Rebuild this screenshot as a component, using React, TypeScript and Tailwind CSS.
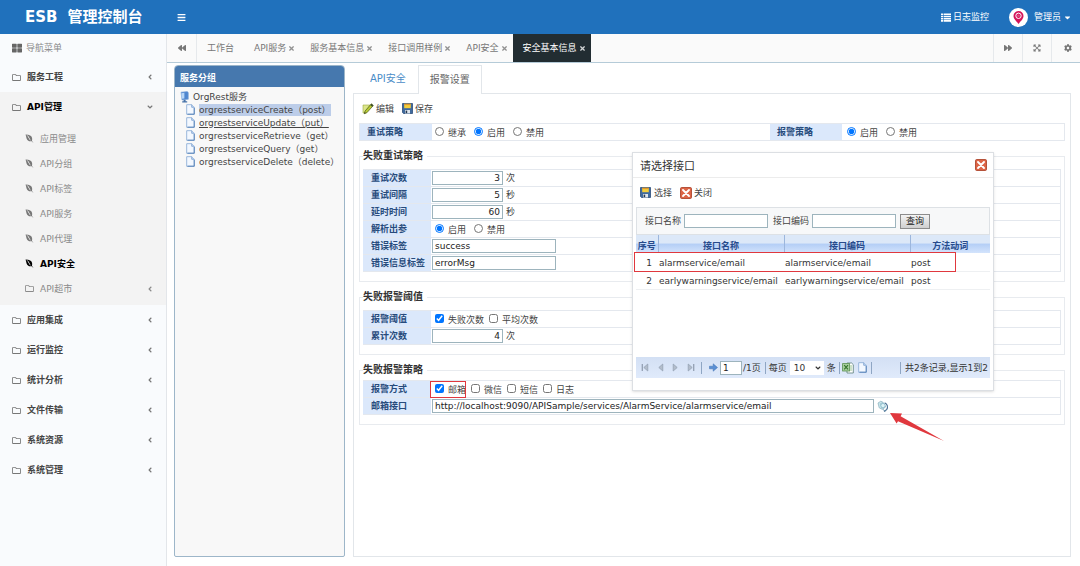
import { useState } from 'react'
import type { ReactNode } from 'react'
import {
  FaAngleDown,
  FaAngleLeft,
  FaBackward,
  FaBars,
  FaCaretDown,
  FaCog,
  FaEnvira,
  FaExpandArrowsAlt,
  FaForward,
  FaRegFolder,
  FaThLarge,
  FaTimes,
} from 'react-icons/fa'

const apiChildren = ['应用管理', 'API分组', 'API标签', 'API服务', 'API代理', 'API安全']
const otherGroups = ['应用集成', '运行监控', '统计分析', '文件传输', '系统资源', '系统管理']
const openTabs = ['API服务', '服务基本信息', '接口调用样例', 'API安全', '安全基本信息']
const services = [
  'orgrestserviceCreate（post）',
  'orgrestserviceUpdate（put）',
  'orgrestserviceRetrieve（get）',
  'orgrestserviceQuery（get）',
  'orgrestserviceDelete（delete）',
]
const interfaces = [
  { name: 'alarmservice/email', code: 'alarmservice/email', verb: 'post' },
  { name: 'earlywarningservice/email', code: 'earlywarningservice/email', verb: 'post' },
]

/* ---------- icons ---------- */

function ListIcon() {
  return (
    <svg width="10" height="9" viewBox="0 0 10 9" aria-hidden="true">
      <path d="M0 .5h2v1.600H0zM0 2.700h2v1.600H0zM0 4.900h2v1.600H0zM0 7.100h2v1.600H0z" fill="currentColor" />
      <path d="M2.600.5H10v1.600H2.600zM2.600 2.700H10v1.600H2.600zM2.600 4.900H10v1.600H2.600zM2.600 7.100H10v1.600H2.600z" fill="currentColor" />
    </svg>
  )
}

function PencilIcon() {
  return (
    <svg width="12" height="12" viewBox="0 0 12 12" aria-hidden="true">
      <path d="M1 2h6v1.5H2.5V10H1z" fill="#c9d65c" />
      <path d="M1 2h7L3 10H1z" fill="#dbe58a" stroke="#9aa83c" strokeWidth=".6" />
      <path d="M9.4.8l1.9 1.7-6.4 7.2-2.5 1 .6-2.6z" fill="#b7c934" stroke="#4d5b18" strokeWidth=".7" />
      <path d="M9.4.8l1.9 1.7-1.1 1.2L8.3 2z" fill="#3b4a2a" />
      <path d="M2.4 10.7l.4-1.4.9.8z" fill="#222" />
    </svg>
  )
}

function DiskIcon() {
  return (
    <svg width="11" height="11" viewBox="0 0 11 11" aria-hidden="true">
      <path d="M.5.5h10v10H1.5l-1-1z" fill="#3f6a9e" stroke="#2c4d78" strokeWidth=".8" />
      <path d="M2.2.8h6.6v4.4H2.2z" fill="#f4cf3c" />
      <path d="M2.2.8h6.6v1.3H2.2z" fill="#e0962b" />
      <path d="M3 7h5v3.5H3z" fill="#dfe6ee" />
      <path d="M3.6 7.6h1.6v2.5H3.6z" fill="#26384f" />
    </svg>
  )
}

function CrossIcon() {
  return (
    <svg width="12" height="12" viewBox="0 0 12 12" aria-hidden="true">
      <rect x=".5" y=".5" width="11" height="11" rx="1.2" fill="#dc6446" stroke="#b5523a" />
      <path d="M3 3l6 6M9 3L3 9" stroke="#fff" strokeWidth="1.9" strokeLinecap="round" />
    </svg>
  )
}

function ServerIcon() {
  return (
    <svg width="9" height="12" viewBox="0 0 9 12" aria-hidden="true">
      <path d="M1 1.2L7.2.5 8.3 1.6v6.6L2 9z" fill="#4f86cf" stroke="#7ea6da" strokeWidth=".6" />
      <path d="M1.4 2.2l3-.4v5.6l-2.6.4z" fill="#b8d6f7" />
      <path d="M3.6 8.8h2v1.4h1.6v1.2H2.2v-1.2h1.4z" fill="#4672a8" />
    </svg>
  )
}

function PageIcon() {
  return (
    <svg width="9" height="11" viewBox="0 0 9 11" aria-hidden="true">
      <path d="M.7.7h5l2.6 2.6v7H.7z" fill="#f3f8ff" stroke="#8fb0d8" strokeWidth=".9" />
      <path d="M5.7.7v2.6h2.6" fill="#c6dbf5" stroke="#6d95c8" strokeWidth=".7" />
      <path d="M8.2 4v6.2H1.5" fill="none" stroke="#4f7db5" strokeWidth=".9" />
    </svg>
  )
}

function ExcelIcon() {
  return (
    <svg width="12" height="12" viewBox="0 0 12 12" aria-hidden="true">
      <path d="M5 1h4.6l1.7 1.7V11H5z" fill="#fff" stroke="#5a7f78" strokeWidth=".8" />
      <path d="M7.5 4h2.6M7.5 6h2.6M7.5 8h2.6" stroke="#7fb574" strokeWidth=".8" />
      <rect x=".6" y="1.6" width="7" height="7.4" fill="#a9cf9f" stroke="#5b9152" strokeWidth=".8" />
      <path d="M2.2 3.2l3.8 4.2M6 3.2L2.2 7.4" stroke="#35752d" strokeWidth="1.2" />
    </svg>
  )
}

function LookupIcon() {
  return (
    <svg width="12" height="12" viewBox="0 0 12 12" aria-hidden="true">
      <path d="M1 3l2.800-1.800L6.200 2.400 8.600 7 5.400 9.400 2.200 7.800z" fill="#c8e6ec" stroke="#86aebb" strokeWidth=".7" />
      <path d="M3.400 3.600L5.800 2.600M3.400 3.600l2 5.400" stroke="#8fb5c2" strokeWidth=".6" />
      <circle cx="6" cy="5.600" r="2.200" fill="#e2f6fa" fillOpacity=".8" stroke="#7fb3c4" strokeWidth=".7" />
      <path d="M8 3c2.400 1.200 3.200 4 1.800 6.400L7.400 11.200" fill="none" stroke="#4a6f93" strokeWidth="1.100" strokeLinecap="round" />
      <path d="M6.400 9.400l1.200 1.800 1.600-.8" fill="none" stroke="#5f87a5" strokeWidth=".9" />
    </svg>
  )
}

function PagerIcon({ flip = false, edge = false }: { flip?: boolean; edge?: boolean }) {
  return (
    <svg width="9" height="9" viewBox="0 0 9 9" className={flip ? 'rotate-180' : ''} aria-hidden="true">
      {edge && <path d="M1.3 1v7" stroke="#93a0b3" strokeWidth="1.3" />}
      <path d="M6.8 1v7L2.8 4.5z" fill="#b3bdcb" stroke="#8f9db0" strokeWidth=".7" />
    </svg>
  )
}

/* ---------- shell ---------- */

function TopBar() {
  return (
    <header className="flex h-[34px] shrink-0 items-center bg-[#2071bc] text-white">
      <h1 className="flex w-[167px] shrink-0 gap-2.5 pl-[25px] text-[15px] leading-none font-bold">
        <span>ESB</span>
        <span>管理控制台</span>
      </h1>
      <button aria-label="菜单" className="ml-2.5">
        <FaBars size={9} />
      </button>
      <a href="#logs" className="ml-auto flex items-center gap-0.5">
        <ListIcon />
        日志监控
      </a>
      <button className="mr-2 ml-5 flex items-center gap-0.5">
        <svg width="19" height="19" viewBox="0 0 19 19" className="mr-1" aria-hidden="true">
          <circle cx="9.5" cy="9.5" r="9.5" fill="#fff" />
          <path d="M9.5 16c-1.400-2.300-5-4.600-5-8a5 5 0 0 1 10 0c0 3.400-3.600 5.700-5 8z" fill="#d4145a" />
          <circle cx="9.500" cy="7.800" r="2.700" fill="none" stroke="#fff" strokeWidth="1" />
          <circle cx="9.500" cy="7.800" r="1.300" fill="#e0487e" />
        </svg>
        管理员
        <FaCaretDown size={9} />
      </button>
    </header>
  )
}

function GroupItem({ label, open = false }: { label: string; open?: boolean }) {
  return (
    <a
      href="#group"
      className={`flex h-[30px] items-center gap-1.5 pr-3 pl-3 font-bold ${open ? 'text-black' : 'text-[#444]'}`}
    >
      <FaRegFolder size={9} className="text-[#777]" />
      <span className="flex-1">{label}</span>
      {open ? <FaAngleDown size={8} className="text-[#777]" /> : <FaAngleLeft size={8} className="text-[#777]" />}
    </a>
  )
}

function Sidebar() {
  return (
    <nav className="w-[167px] shrink-0 border-r border-[#e3e6ea] bg-[#f9fbfd]">
      <div className="flex h-7 items-center gap-1 pl-3 text-[#888]">
        <FaThLarge size={10} className="text-[#666]" />
        导航菜单
      </div>
      <GroupItem label="服务工程" />
      <div className="bg-[#f3f3f3] pb-1">
        <GroupItem label="API管理" open />
        <ul className="pt-1">
          {apiChildren.map((item) => (
            <li key={item}>
              <a
                href="#item"
                className={`flex h-[25px] items-center gap-1.5 pl-[25px] ${
                  item === 'API安全' ? 'font-bold text-black' : 'text-[#8a8a8a]'
                }`}
              >
                <FaEnvira size={9} className={item === 'API安全' ? '' : 'text-[#777]'} />
                {item}
              </a>
            </li>
          ))}
          <li>
            <a href="#item" className="flex h-[25px] items-center gap-1.5 pr-3 pl-[25px] text-[#8a8a8a]">
              <FaRegFolder size={9} />
              <span className="flex-1">API超市</span>
              <FaAngleLeft size={8} />
            </a>
          </li>
        </ul>
      </div>
      {otherGroups.map((g) => (
        <GroupItem key={g} label={g} />
      ))}
    </nav>
  )
}

function TabBar() {
  return (
    <div className="flex h-[29px] shrink-0 border-b border-[#b5cbd8] bg-[#fafafa] text-[#777]">
      <button aria-label="向左" className="flex w-[30px] items-center justify-center border-r border-[#e6e9ec]">
        <FaBackward size={8} />
      </button>
      <a href="#home" className="flex items-center px-2.5">
        工作台
      </a>
      {openTabs.map((t) => (
        <a
          key={t}
          href="#tab"
          className={`flex items-center gap-0.5 pr-1.5 pl-2.5 whitespace-nowrap ${
            t === '安全基本信息' ? 'bg-[#222d32] text-white' : ''
          }`}
        >
          {t}
          <FaTimes size={7} className="-mr-px opacity-80" />
        </a>
      ))}
      <div className="ml-auto flex">
        <button aria-label="向右" className="flex w-[29px] items-center justify-center border-l border-[#e6e9ec]">
          <FaForward size={8} />
        </button>
        <button aria-label="全屏" className="flex w-[29px] items-center justify-center border-l border-[#e6e9ec]">
          <FaExpandArrowsAlt size={8} />
        </button>
        <button aria-label="设置" className="flex w-[29px] items-center justify-center border-l border-[#e6e9ec] pl-1">
          <FaCog size={8} />
        </button>
      </div>
    </div>
  )
}

function ServiceTree() {
  return (
    <aside className="w-[171px] shrink-0 overflow-hidden rounded-t-[4px] rounded-b-[2px] border border-[#9db6c9] bg-[#f8f8f8]">
      <h2 className="flex h-[21px] items-center bg-[#4678ae] pt-0.5 pl-[5px] font-bold text-white">服务分组</h2>
      <div className="pt-[3px] pl-[5px]">
        <div className="flex h-[13px] items-center gap-1">
          <ServerIcon />
          OrgRest服务
        </div>
        <ul>
          {services.map((s, i) => (
            <li key={s} className="flex h-[13px] items-center gap-1 pl-1.5 whitespace-nowrap">
              <PageIcon />
              <a
                href="#service"
                className={`leading-3 ${i === 0 ? 'bg-[#bccde9]' : ''} ${i === 1 ? 'underline' : ''}`}
              >
                {s}
              </a>
            </li>
          ))}
        </ul>
      </div>
    </aside>
  )
}

/* ---------- form parts ---------- */

function Row({ label, htmlFor, children }: { label: string; htmlFor?: string; children: ReactNode }) {
  return (
    <div className="flex h-[17px] border-b border-[#e4e8ee]">
      <label
        htmlFor={htmlFor}
        className="flex w-[68px] shrink-0 items-center bg-[#dbe8fb] pl-2 font-bold whitespace-nowrap text-[#274b7c]"
      >
        {label}
      </label>
      <div className="flex min-w-0 flex-1 items-center gap-[3px] pl-px">{children}</div>
    </div>
  )
}

function Section({ title, tight = false, children }: { title: string; tight?: boolean; children: ReactNode }) {
  return (
    <fieldset className={`mt-2 min-w-0 border border-[#e8ebef] px-[3px] pb-[9px] ${tight ? 'pt-[3px]' : 'pt-1.5'}`}>
      <legend className="h-3.5 pr-1 text-[10px] leading-[14px] font-bold text-[#333]">{title}</legend>
      <div className="border-t border-r border-[#e4e8ee]">{children}</div>
    </fieldset>
  )
}

const fieldClass = 'h-3.5 border border-[#9db4bd] bg-white px-0.5 text-[#222] outline-none'

interface ChoiceProps {
  type: 'radio' | 'checkbox'
  name: string
  label: string
  checked?: boolean
  marked?: boolean
}

function Choice({ type, name, label, checked = false, marked = false }: ChoiceProps) {
  return (
    <label className="relative flex items-center gap-1 pt-px whitespace-nowrap">
      <input type={type} name={name} defaultChecked={checked} className="mb-0.5 size-[9px]" />
      {label}
      {marked && <span className="absolute -inset-y-0.5 right-0 -left-[5px] border border-[#e0383e]" />}
    </label>
  )
}

function AlarmForm() {
  return (
    <div className="min-h-0 flex-1 border border-[#e2e6ea] bg-white px-[5px]">
      <div className="flex h-[29px] items-center gap-2 pl-[3px]">
        <button className="flex items-center gap-0.5">
          <PencilIcon />
          编辑
        </button>
        <button className="flex items-center gap-0.5">
          <DiskIcon />
          保存
        </button>
      </div>

      <div className="flex h-[18px] border border-[#e4e8ee]">
        <span className="flex w-[72px] shrink-0 items-center bg-[#dbe8fb] pl-[7px] font-bold text-[#274b7c]">重试策略</span>
        <div className="flex flex-1 items-center gap-2 pl-[3px]">
          <Choice type="radio" name="retry" label="继承" />
          <Choice type="radio" name="retry" label="启用" checked />
          <Choice type="radio" name="retry" label="禁用" />
        </div>
        <span className="flex w-[72px] shrink-0 items-center bg-[#dbe8fb] pl-[7px] font-bold text-[#274b7c]">报警策略</span>
        <div className="flex w-[222px] shrink-0 items-center gap-2 pl-[5px]">
          <Choice type="radio" name="alarm" label="启用" checked />
          <Choice type="radio" name="alarm" label="禁用" />
        </div>
      </div>

      <Section title="失败重试策略">
        <Row label="重试次数" htmlFor="times">
          <input id="times" defaultValue="3" className={`${fieldClass} w-[71px] text-right`} />次
        </Row>
        <Row label="重试间隔" htmlFor="interval">
          <input id="interval" defaultValue="5" className={`${fieldClass} w-[71px] text-right`} />秒
        </Row>
        <Row label="延时时间" htmlFor="delay">
          <input id="delay" defaultValue="60" className={`${fieldClass} w-[71px] text-right`} />秒
        </Row>
        <Row label="解析出参">
          <div className="flex gap-2 pl-[3px]">
            <Choice type="radio" name="parse" label="启用" checked />
            <Choice type="radio" name="parse" label="禁用" />
          </div>
        </Row>
        <Row label="错误标签" htmlFor="errTag">
          <input id="errTag" defaultValue="success" className={`${fieldClass} w-[124px]`} />
        </Row>
        <Row label="错误信息标签" htmlFor="errMsg">
          <input id="errMsg" defaultValue="errorMsg" className={`${fieldClass} w-[124px]`} />
        </Row>
      </Section>

      <Section title="失败报警阈值">
        <Row label="报警阈值">
          <div className="flex gap-[5px] pl-[3px]">
            <Choice type="checkbox" name="failures" label="失败次数" checked />
            <Choice type="checkbox" name="average" label="平均次数" />
          </div>
        </Row>
        <Row label="累计次数" htmlFor="total">
          <input id="total" defaultValue="4" className={`${fieldClass} w-[71px] text-right`} />次
        </Row>
      </Section>

      <Section title="失败报警策略" tight>
        <Row label="报警方式">
          <div className="flex gap-[5px] pl-[3px]">
            <Choice type="checkbox" name="mail" label="邮箱" checked marked />
            <Choice type="checkbox" name="wechat" label="微信" />
            <Choice type="checkbox" name="sms" label="短信" />
            <Choice type="checkbox" name="log" label="日志" />
          </div>
        </Row>
        <Row label="邮箱接口" htmlFor="mailApi">
          <input
            id="mailApi"
            defaultValue="http://localhost:9090/APISample/services/AlarmService/alarmservice/email"
            className={`${fieldClass} w-[442px]`}
          />
          <button aria-label="选择接口" className="relative">
            <LookupIcon />
            <svg width="56" height="30" viewBox="0 0 56 30" className="absolute top-3 left-3" aria-hidden="true">
              <path d="M1 1l12 .6-1.400 2.700L55 29 9 9.200 7.600 11.600z" fill="#e0383e" />
            </svg>
          </button>
        </Row>
      </Section>
    </div>
  )
}

/* ---------- dialog ---------- */

function Separator() {
  return <span className="h-3 w-px shrink-0 bg-[#8fa6c4]" />
}

function InterfaceDialog() {
  const [pageSize, setPageSize] = useState('10')

  return (
    <section
      role="dialog"
      aria-label="请选择接口"
      className="absolute top-[89px] right-[86px] flex h-[239px] w-[362px] flex-col border border-[#dcdfe3] bg-white px-[3px] shadow-sm"
    >
      <div className="-mx-[3px] flex h-[25px] shrink-0 items-center justify-between border-b border-[#ececec] pr-1.5 pl-[7px]">
        <h2 className="pt-[3px] text-[11px] text-[#333]">请选择接口</h2>
        <button aria-label="关闭窗口">
          <CrossIcon />
        </button>
      </div>

      <div className="flex h-[29px] shrink-0 items-center gap-2 pl-1">
        <button className="flex items-center gap-[3px]">
          <DiskIcon />
          选择
        </button>
        <button className="flex items-center gap-0.5">
          <CrossIcon />
          关闭
        </button>
      </div>

      <form className="flex h-7 shrink-0 items-center border border-[#dde1e5] bg-[#f7f8f9] pl-2">
        <label htmlFor="qName">接口名称</label>
        <input id="qName" className={`${fieldClass} ml-[3px] w-[84px]`} />
        <label htmlFor="qCode" className="ml-[5px]">
          接口编码
        </label>
        <input id="qCode" className={`${fieldClass} ml-[3px] w-[84px]`} />
        <button
          type="button"
          className="ml-1 h-[15px] w-[30px] border border-[#8c8c8c] bg-linear-to-b from-[#f4f4f4] to-[#cfcfcf] leading-none text-[#222]"
        >
          查询
        </button>
      </form>

      <div className="relative flex-1">
        <table className="w-full table-fixed border-collapse">
          <colgroup>
            <col className="w-[22px]" />
            <col className="w-[126px]" />
            <col className="w-[126px]" />
            <col />
          </colgroup>
          <thead>
            <tr className="h-[18px] bg-linear-to-b from-[#dce8f8] from-45% via-[#b4cef6] via-50% to-[#d3e4fc] text-[#274b8c]">
              <th className="border-r border-[#9cb6dc] pt-1">序号</th>
              <th className="border-r border-[#9cb6dc] pt-1">接口名称</th>
              <th className="border-r border-[#9cb6dc] pt-1">接口编码</th>
              <th className="pt-1">方法动词</th>
            </tr>
          </thead>
          <tbody className="text-[#333]">
            {interfaces.map((row, i) => (
              <tr key={row.name} className="h-[18px] border-b border-[#eef0f2]">
                <td className="pt-0.5 pr-1.5 text-right">{i + 1}</td>
                <td className="pt-0.5 pl-px">{row.name}</td>
                <td className="pt-0.5 pl-px">{row.code}</td>
                <td className="pt-0.5 pl-px">{row.verb}</td>
              </tr>
            ))}
          </tbody>
        </table>
        <span className="absolute top-[17px] right-[34px] -left-0.5 h-5 border border-[#e0383e]" />
      </div>

      <div className="mb-3 flex h-[21px] shrink-0 items-center bg-linear-to-b from-[#d3e0f4] to-[#e0eafb] pl-[5px] whitespace-nowrap text-[#333]">
        <div className="flex gap-1.5">
          <button aria-label="首页"><PagerIcon edge /></button>
          <button aria-label="上一页"><PagerIcon /></button>
          <button aria-label="下一页"><PagerIcon flip /></button>
          <button aria-label="末页"><PagerIcon edge flip /></button>
        </div>
        <div className="ml-1.5 flex items-center">
          <Separator />
          <button aria-label="跳转" className="mr-0.5 ml-[7px]">
            <svg width="9" height="9" viewBox="0 0 9 9" aria-hidden="true">
              <path d="M.5 3.200h3.700V.8l4.300 3.700-4.300 3.700V5.800H.5z" fill="#5a8fd4" stroke="#3f6fb0" strokeWidth=".5" />
            </svg>
          </button>
          <input aria-label="页码" defaultValue="1" className={`${fieldClass} mr-px w-[22px]`} />
          /1页
        </div>
        <div className="ml-1 flex items-center gap-[3px]">
          <Separator />
          <label htmlFor="pageSize">每页</label>
          <span className="relative flex items-center">
            <select
              id="pageSize"
              value={pageSize}
              onChange={(e) => setPageSize(e.target.value)}
              className="h-3.5 w-[34px] appearance-none bg-white pl-1"
            >
              <option>10</option>
              <option>20</option>
              <option>50</option>
            </select>
            <FaAngleDown size={8} className="pointer-events-none absolute right-0.5" />
          </span>
          条
          <Separator />
        </div>
        <div className="ml-0.5 flex items-center gap-1">
          <button aria-label="导出"><ExcelIcon /></button>
          <button aria-label="打印"><PageIcon /></button>
          <Separator />
        </div>
        <div className="ml-auto flex items-center gap-1 pr-0.5">
          <Separator />
          共2条记录,显示1到2
        </div>
      </div>
    </section>
  )
}

export default function App() {
  return (
    <div className="flex min-h-screen flex-col bg-white font-['DejaVu_Sans','Noto_Sans_CJK_SC',sans-serif] text-[9px] leading-3 text-[#444]">
      <TopBar />
      <div className="flex flex-1">
        <Sidebar />
        <div className="flex min-w-0 flex-1 flex-col">
          <TabBar />
          <main className="relative flex flex-1 gap-2 pt-0.5 pr-[9px] pb-[9px] pl-[7px]">
            <ServiceTree />
            <div className="flex min-w-0 flex-1 flex-col">
              <div className="flex h-7 text-[10px]">
                <a href="#security" className="flex items-center pr-3 pl-[17px] text-[#4a8cc7]">
                  API安全
                </a>
                <a
                  href="#alarm"
                  className="relative -mb-px flex items-center border border-b-0 border-[#e2e6ea] bg-white px-[11px] text-[#666]"
                >
                  报警设置
                </a>
              </div>
              <AlarmForm />
            </div>
            <InterfaceDialog />
          </main>
        </div>
      </div>
    </div>
  )
}
